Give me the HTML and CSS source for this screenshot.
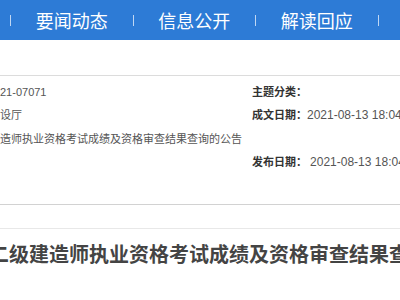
FILE: index.html
```html
<!DOCTYPE html>
<html lang="zh-CN">
<head>
    <meta charset="UTF-8">
    <meta name="viewport" content="width=device-width, initial-scale=1.0">
    <title>二级建造师执业资格考试成绩及资格审查结果查询的公告</title>
    <link rel="stylesheet" href="styles.css">
</head>
<body>

    <div class="nav">
        <span class="sep"></span>
        <a class="nav-item" href="#">要闻动态</a>
        <span class="sep"></span>
        <a class="nav-item" href="#">信息公开</a>
        <span class="sep"></span>
        <a class="nav-item" href="#">解读回应</a>
        <span class="sep"></span>
    </div>

    <div class="meta">
        <div class="cell value">21-07071</div>
        <div class="cell"><span class="label">主题分类：</span></div>

        <div class="cell value">设厅</div>
        <div class="cell"><span class="label">成文日期：</span><span class="num">2021-08-13 18:04</span></div>

        <div class="cell value wide">造师执业资格考试成绩及资格审查结果查询的公告</div>

        <div class="cell value"></div>
        <div class="cell"><span class="label">发布日期：</span> <span class="num">2021-08-13 18:04</span></div>
    </div>

    <div class="divider"></div>

    <h1 class="title">二级建造师执业资格考试成绩及资格审查结果查询的公告</h1>

</body>
</html>
```

FILE: styles.css
```css
* {
    margin: 0;
    padding: 0;
    box-sizing: border-box;
    font-family: 'Liberation Sans', 'Noto Sans CJK SC', sans-serif;
}
body {
    background: white;
    overflow: hidden;
}
.nav {
    display: flex;
    align-items: center;
    height: 40px;
    padding-left: 10px;
    background: #2d7bd6;
}
.nav .sep {
    width: 1px;
    height: 11px;
    background: rgba(255, 255, 255, 0.7);
}
.nav-item {
    width: 121.5px;
    text-align: center;
    font-size: 18px;
    color: white;
    text-decoration: none;
}
.meta {
    display: grid;
    grid-template-columns: 252px 1fr;
    grid-auto-rows: 23.3px;
    margin-top: 35px;
    padding: 5px 0 30px;
    border-top: 1px solid #dcdcdc;
}
.cell {
    font-size: 11px;
    line-height: 23px;
    color: #555;
    white-space: nowrap;
    overflow: hidden;
}
.cell.wide {
    grid-column: 1 / 3;
}
.label {
    font-weight: bold;
    color: #333;
}
.num {
    font-size: 12px;
    color: #555;
}
.divider {
    height: 25px;
    border-top: 1px solid #d2d2d2;
    border-bottom: 1px solid #e8e8e8;
}
.title {
    margin-left: -11px;
    margin-top: 11px;
    font-size: 20px;
    line-height: 30px;
    font-weight: bold;
    color: #444;
    white-space: nowrap;
}
```
